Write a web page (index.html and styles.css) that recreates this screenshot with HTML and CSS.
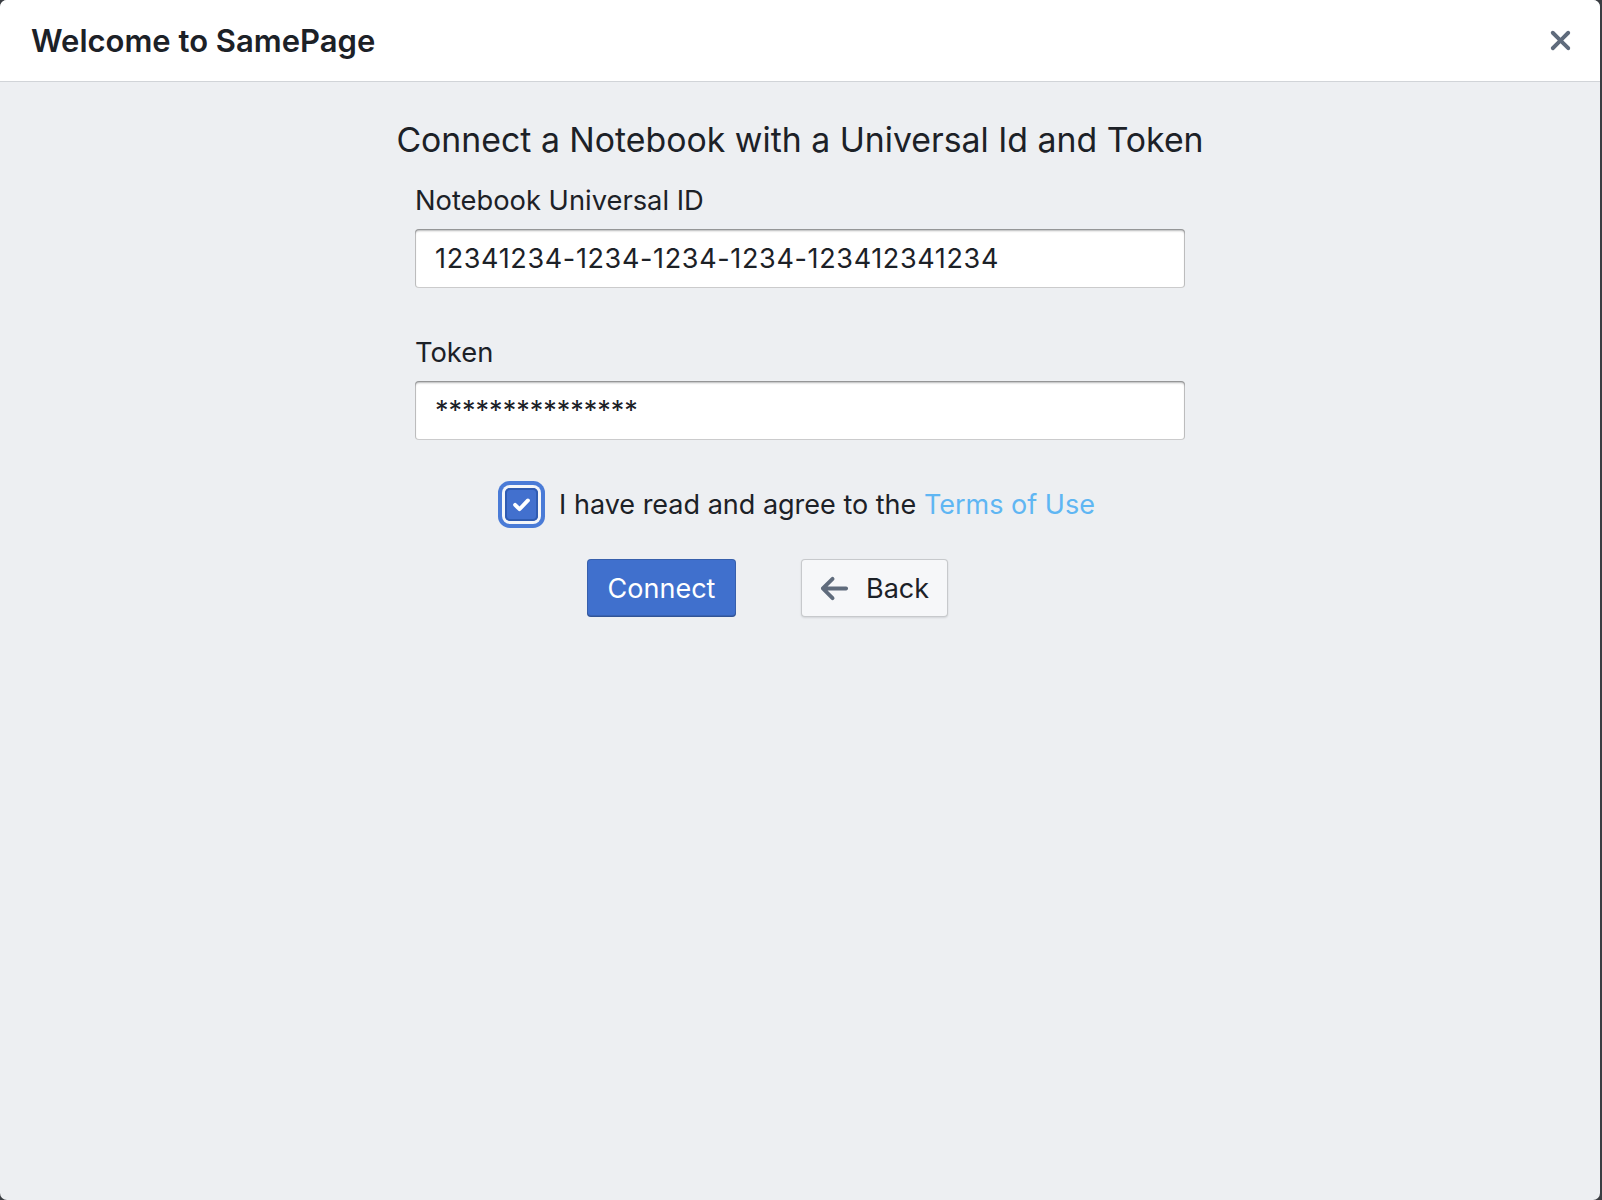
FILE: index.html
```html
<!DOCTYPE html>
<html lang="en">
<head>
<meta charset="utf-8">
<title>Welcome to SamePage</title>
<link rel="stylesheet" href="styles.css">
</head>
<body>
<div class="dialog">
  <div class="dialog-header">
    <h5 class="dialog-title">Welcome to SamePage</h5>
    <button class="close-btn" aria-label="Close">
      <svg viewBox="0 0 16 16" width="31" height="31"><path fill="currentColor" d="M9.41 8l3.29-3.29c.19-.18.3-.43.3-.71a1.003 1.003 0 00-1.71-.71L8 6.59l-3.29-3.3a1.003 1.003 0 00-1.42 1.42L6.59 8 3.3 11.29c-.19.18-.3.43-.3.71a1.003 1.003 0 001.71.71L8 9.41l3.290 3.29c.18.19.43.3.71.3a1.003 1.003 0 00.71-1.71L9.41 8z"/></svg>
    </button>
  </div>
  <div class="dialog-body">
    <h4 class="heading">Connect a Notebook with a Universal Id and Token</h4>
    <div class="form">
      <label class="field-label">Notebook Universal ID</label>
      <div class="input input-id">12341234-1234-1234-1234-123412341234</div>
      <label class="field-label token-label">Token</label>
      <div class="input">***************</div>
    </div>
    <div class="check-row">
      <span class="checkbox">
        <svg viewBox="0 0 16 16" width="27" height="27"><path d="M4.2 8.2l2.6 2.6L11.8 5.6" fill="none" stroke="#fff" stroke-width="2.3" stroke-linecap="round" stroke-linejoin="round"/></svg>
      </span>
      <span class="check-text">I have read and agree to the <a class="link">Terms of Use</a></span>
    </div>
    <div class="actions">
      <button class="btn btn-primary">Connect</button>
      <button class="btn btn-default">
        <svg class="btn-icon" viewBox="0 0 16 16" width="31" height="31"><path fill="currentColor" d="M13.99 6.99H4.41L7.7 3.7a1.003 1.003 0 00-1.42-1.420l-5 5c-.18.18-.29.43-.29.71 0 .28.11.53.29.71l5 5a1.003 1.003 0 001.42-1.42L4.41 8.99H14c.55 0 1-.45 1-1s-.46-1-1.01-1z"/></svg>
        <span>Back</span>
      </button>
      <span class="spacer"></span>
    </div>
  </div>
</div>
</body>
</html>
```
FILE: styles.css
```css
html, body {
  margin: 0;
  padding: 0;
}
body {
  background: #3a3d42;
  width: 1602px;
  height: 1200px;
  overflow: hidden;
  font-family: Inter, "Noto Sans", "Liberation Sans", sans-serif;
  color: #1c2127;
}
.dialog {
  width: 1600px;
  height: 1200px;
  background: #edeff2;
  border-radius: 7px;
  overflow: hidden;
  display: flex;
  flex-direction: column;
}
.dialog-header {
  height: 81px;
  flex: none;
  background: #ffffff;
  border-bottom: 1px solid #d1d4d8;
  display: flex;
  align-items: center;
  padding: 0 24px 0 31px;
}
.dialog-title {
  margin: 0;
  flex: 1;
  font-size: 31px;
  font-weight: 600;
  line-height: 40px;
  color: #1c2127;
}
.close-btn {
  border: 0;
  background: transparent;
  padding: 0;
  width: 31px;
  height: 31px;
  color: #5f6b7c;
  display: flex;
}
.dialog-body {
  display: flex;
  flex-direction: column;
  align-items: center;
}
.heading {
  margin: 37px 0 0;
  font-size: 33.8px;
  font-weight: 400;
  line-height: 42px;
}
.form {
  width: 770px;
  display: flex;
  flex-direction: column;
  margin-top: 24px;
}
.field-label {
  font-size: 27.3px;
  line-height: 32px;
}
.token-label {
  margin-top: 49px;
}
.input {
  margin-top: 12px;
  height: 59px;
  box-sizing: border-box;
  background: #ffffff;
  border-radius: 4px;
  box-shadow: inset 0 0 0 1px rgba(17, 20, 24, 0.22), inset 0 2px 2px rgba(17, 20, 24, 0.3);
  padding: 0 20px;
  font-size: 27px;
  line-height: 59px;
  color: #1c2127;
}
.input-id {
  letter-spacing: 0.65px;
}
.check-row {
  margin-top: 48px;
  display: flex;
  align-items: center;
  gap: 21px;
}
.checkbox {
  width: 33px;
  height: 33px;
  box-sizing: border-box;
  border-radius: 5px;
  background: #4270ce;
  box-shadow: inset 0 0 0 2px #2f5bb1, 0 0 0 3px #f4f6f9, 0 0 0 7px #4a7bd7;
  display: flex;
  align-items: center;
  justify-content: center;
}
.check-text {
  font-size: 27px;
  line-height: 32px;
}
.link {
  color: #5fb6f3;
}
.actions {
  margin-top: 38px;
  display: flex;
  gap: 65px;
}
.btn {
  height: 58px;
  box-sizing: border-box;
  border: 0;
  border-radius: 4px;
  font-family: inherit;
  font-size: 27px;
  display: flex;
  align-items: center;
  padding: 0 20px;
}
.btn-primary {
  width: 149px;
  justify-content: center;
  background: #4070cd;
  color: #ffffff;
  box-shadow: inset 0 0 0 1px rgba(17, 20, 24, 0.18), inset 0 -2px 0 rgba(17, 20, 24, 0.15);
}
.btn-default {
  width: 147px;
  padding-left: 18px;
  background: #f6f7f9;
  color: #1c2127;
  box-shadow: inset 0 0 0 1px rgba(17, 20, 24, 0.2), 0 1px 2px rgba(17, 20, 24, 0.12);
}
.btn-icon {
  color: #5f6b7c;
  margin-right: 16px;
  flex: none;
}
.spacer {
  width: 0;
}
```
